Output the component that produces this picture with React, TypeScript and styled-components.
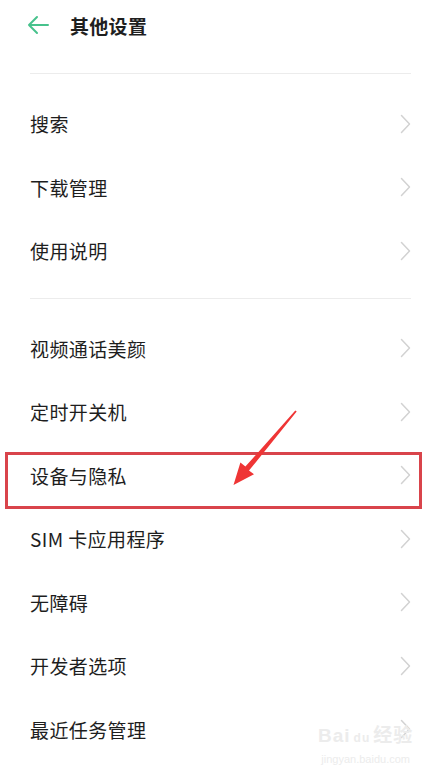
import styled, { createGlobalStyle } from "styled-components";

const GlobalStyle = createGlobalStyle`
    html, body {
        margin: 0;
        padding: 0;
        background: #ffffff;
    }
    body {
        font-family: "Noto Sans CJK SC", "Noto Sans", "Liberation Sans", sans-serif;
        color: #222222;
    }
`;

const groups: string[][] = [
    ["搜索", "下载管理", "使用说明"],
    ["视频通话美颜", "定时开关机", "设备与隐私", "SIM 卡应用程序", "无障碍", "开发者选项", "最近任务管理"],
];

const highlighted = "设备与隐私";

const BackIcon = () => (
    <svg width="22" height="20" viewBox="0 0 22 20" fill="none">
        <path d="M2 10H21M10 2L2 10L10 18" stroke="#47c28c" strokeWidth="2" strokeLinecap="round" strokeLinejoin="round" />
    </svg>
);

const Chevron = () => (
    <svg width="11" height="20" viewBox="0 0 11 20" fill="none">
        <path d="M1.5 1.5L9.5 10L1.5 18.5" stroke="#d2d2d2" strokeWidth="1.5" strokeLinecap="round" strokeLinejoin="round" />
    </svg>
);

const App = () => {
    return (
        <Page>
            <GlobalStyle />
            <Header>
                <BackIcon />
                <Title>其他设置</Title>
            </Header>
            {groups.map((items, gi) => (
                <Group key={gi}>
                    <Divider />
                    <List>
                        {items.map((label) => (
                            <Row key={label}>
                                <Label>{label}</Label>
                                <Chevron />
                                {label === highlighted && <HighlightBox />}
                            </Row>
                        ))}
                    </List>
                </Group>
            ))}
            <Annotation width="437" height="775" viewBox="0 0 437 775">
                <polygon
                    points="295.3,410.5 245.4,466.6 240.4,462.6 233.5,485 254,474.2 249,470.6 296.7,411.5"
                    fill="#ef3535"
                />
            </Annotation>
            <Watermark>
                <MarkLine>
                    Bai<Paw>du</Paw>经验
                </MarkLine>
                <MarkUrl>jingyan.baidu.com</MarkUrl>
            </Watermark>
        </Page>
    );
};

export default App;

const Page = styled.div`
    position: relative;
    width: 437px;
    height: 775px;
    overflow: hidden;
    padding: 0 26px 0 30px;
    box-sizing: border-box;
    background: #ffffff;
`;

const Header = styled.div`
    height: 50px;
    display: flex;
    align-items: center;
    gap: 21px;
    margin-left: -3px;
`;

const Title = styled.h1`
    margin: 0;
    font-size: 19px;
    font-weight: 700;
    color: #1f1f1f;
    letter-spacing: 0.3px;
`;

const Group = styled.section`
    display: flex;
    flex-direction: column;
    &:first-of-type {
        padding-top: 23px;
    }
`;

const Divider = styled.div`
    height: 1px;
    background: #ececec;
`;

const List = styled.div`
    display: flex;
    flex-direction: column;
    padding: 18px 0 15px;
`;

const Row = styled.div`
    position: relative;
    height: 63.5px;
    display: flex;
    align-items: center;
    justify-content: space-between;
`;

const Label = styled.span`
    font-size: 19px;
    color: #1e1e1e;
    letter-spacing: 0.4px;
`;

const HighlightBox = styled.div`
    position: absolute;
    left: -25px;
    right: -11px;
    top: 8px;
    height: 57px;
    border: 3px solid #d9444b;
    box-sizing: border-box;
    pointer-events: none;
`;

const Annotation = styled.svg`
    position: absolute;
    top: 0;
    left: 0;
    pointer-events: none;
`;

const Watermark = styled.div`
    position: absolute;
    left: 318px;
    top: 726px;
    display: flex;
    flex-direction: column;
    align-items: center;
    color: #ececec;
    pointer-events: none;
`;

const MarkLine = styled.div`
    font-family: "Liberation Sans", "Noto Sans CJK SC", sans-serif;
    font-size: 19px;
    font-weight: 700;
    line-height: 20px;
    letter-spacing: 1px;
`;

const Paw = styled.span`
    font-size: 12px;
    margin: 0 3px;
`;

const MarkUrl = styled.div`
    font-family: "Liberation Sans", sans-serif;
    font-size: 11px;
    line-height: 14px;
    margin-top: 4px;
`;
